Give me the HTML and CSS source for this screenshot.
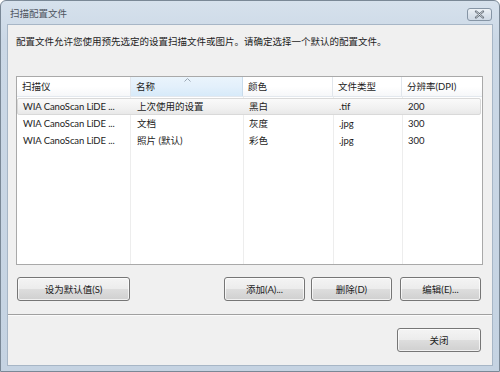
FILE: index.html
```html
<!DOCTYPE html>
<html lang="zh-CN">
<head>
    <meta charset="UTF-8">
    <title>扫描配置文件</title>
    <link rel="stylesheet" href="styles.css">
</head>
<body>
    <div class="window">
        <!-- Barre de titre -->
        <div class="titlebar">
            <span class="title">扫描配置文件</span>
            <button class="close-x" title="关闭">
                <svg width="11" height="9" viewBox="0 0 11 9">
                    <path d="M2 1.5 L9 7.5 M9 1.5 L2 7.5" stroke="#5a6470" stroke-width="2.2" stroke-linecap="round" fill="none"/>
                    <path d="M2 1.5 L9 7.5 M9 1.5 L2 7.5" stroke="#f4f6f8" stroke-width="0.8" stroke-linecap="round" fill="none"/>
                </svg>
            </button>
        </div>

        <div class="client">
            <p class="desc">配置文件允许您使用预先选定的设置扫描文件或图片。请确定选择一个默认的配置文件。</p>

            <!-- Liste des profils -->
            <div class="list">
                <div class="list-head">
                    <div class="col">扫描仪</div>
                    <div class="col sorted">名称
                        <svg class="sort-arrow" width="7" height="4" viewBox="0 0 7 4">
                            <path d="M0.5 3.5 L3.5 0.5 L6.5 3.5" stroke="#9aa7b4" stroke-width="1" fill="none"/>
                        </svg>
                    </div>
                    <div class="col">颜色</div>
                    <div class="col">文件类型</div>
                    <div class="col">分辨率(DPI)</div>
                </div>
                <div class="list-body">
                    <div class="row selected">
                        <div class="cell scanner">WIA CanoScan LiDE ...</div>
                        <div class="cell">上次使用的设置</div>
                        <div class="cell">黑白</div>
                        <div class="cell">.tif</div>
                        <div class="cell">200</div>
                    </div>
                    <div class="row">
                        <div class="cell scanner">WIA CanoScan LiDE ...</div>
                        <div class="cell">文档</div>
                        <div class="cell">灰度</div>
                        <div class="cell">.jpg</div>
                        <div class="cell">300</div>
                    </div>
                    <div class="row">
                        <div class="cell scanner">WIA CanoScan LiDE ...</div>
                        <div class="cell">照片 (默认)</div>
                        <div class="cell">彩色</div>
                        <div class="cell">.jpg</div>
                        <div class="cell">300</div>
                    </div>
                </div>
            </div>

            <div class="actions">
                <button class="btn btn-wide">设为默认值(S)</button>
                <div class="actions-right">
                    <button class="btn">添加(A)...</button>
                    <button class="btn">删除(D)</button>
                    <button class="btn">编辑(E)...</button>
                </div>
            </div>

            <div class="separator"></div>

            <div class="footer">
                <button class="btn">关闭</button>
            </div>
        </div>
    </div>
</body>
</html>
```

FILE: styles.css
```css
body {
    margin: 0;
    font-family: Lato, "Noto Sans CJK SC", sans-serif;
    font-size: 9.5px;
    color: #1c1c1c;
}

.window {
    width: 500px;
    height: 372px;
    box-sizing: border-box;
    border: 1px solid #7a8896;
    border-radius: 6px 6px 0 0;
    background: linear-gradient(#d6e1ec, #cbd8e6 40px, #c5d3e2);
    padding: 0 6px 5px 6px;
    display: flex;
    flex-direction: column;
}

/* Titre */
.titlebar {
    height: 23px;
    display: flex;
    justify-content: space-between;
    align-items: center;
    padding-left: 3px;
}

.title {
    color: #4e5560;
    font-size: 9.5px;
    margin-top: 1px;
}

.close-x {
    width: 25px;
    height: 13px;
    margin: 4px 1px 0 0;
    padding: 0;
    border: 1px solid #8695a5;
    border-radius: 3px;
    background: linear-gradient(#eef2f6, #dbe3ec 50%, #cfd9e4);
    display: flex;
    align-items: center;
    justify-content: center;
}

/* Zone client */
.client {
    flex: 1;
    background: #f0f0f0;
    border: 1px solid #a7b6c6;
    display: flex;
    flex-direction: column;
}

.desc {
    margin: 9px 0 0 8px;
    line-height: 16px;
}

.list {
    margin: 26px 9px 0 8px;
    height: 189px;
    box-sizing: border-box;
    border: 1px solid #a9a9a9;
    background: #fff;
    display: flex;
    flex-direction: column;
}

.list-head {
    display: grid;
    grid-template-columns: 114px 112px 90px 69px 79px;
    height: 19px;
    border-bottom: 1px solid #e3e8ee;
    background: linear-gradient(#ffffff, #ffffff 50%, #f6f7f9);
}

.list-head .col {
    position: relative;
    padding-left: 5px;
    line-height: 19px;
    border-right: 1px solid #e1e6ec;
}

.list-head .col:last-child {
    border-right: none;
}

.list-head .sorted {
    background: linear-gradient(#eaf4fc, #e3f0fb 50%, #d7eaf9);
    border-right-color: #c9dcec;
}

.sort-arrow {
    position: absolute;
    left: 53px;
    top: 1px;
}

.list-body {
    flex: 1;
    padding-top: 1px;
    background:
        linear-gradient(#ededed, #ededed) 113px 0 / 1px 100% no-repeat,
        linear-gradient(#ededed, #ededed) 226px 0 / 1px 100% no-repeat,
        linear-gradient(#ededed, #ededed) 316px 0 / 1px 100% no-repeat,
        linear-gradient(#ededed, #ededed) 385px 0 / 1px 100% no-repeat;
}

.row {
    display: grid;
    grid-template-columns: 114px 112px 90px 69px 77px;
    height: 17px;
    line-height: 16px;
    box-sizing: border-box;
    margin-right: 1px;
    border: 1px solid transparent;
}

.row.selected {
    background: linear-gradient(#fafafa, #f1f1f1 60%, #e8e8e8);
    border-color: #d9d9d9;
    border-radius: 2px;
}

.cell {
    padding-left: 5px;
    white-space: nowrap;
}

.scanner {
    letter-spacing: -0.1px;
}

/* Boutons */
.btn {
    font-family: inherit;
    font-size: 9.5px;
    color: #1c1c1c;
    width: 81px;
    height: 24px;
    padding: 0;
    border: 1px solid #767676;
    border-radius: 3px;
    background: linear-gradient(#f4f4f4, #ececec 48%, #dddddd 52%, #d0d0d0);
    box-shadow: inset 0 0 0 1px rgba(255, 255, 255, 0.7);
}

.btn-wide {
    width: 113px;
}

.actions {
    margin: 12px 11px 0 9px;
    display: flex;
    justify-content: space-between;
}

.actions-right {
    display: flex;
    gap: 6px;
}

.actions-right .btn:last-child {
    margin-left: 2px;
}

.separator {
    margin-top: 13px;
    height: 1px;
    background: #a0a0a0;
    border-bottom: 1px solid #fbfbfb;
}

.footer {
    margin: 12px 11px 0 0;
    display: flex;
    justify-content: flex-end;
}

.footer .btn {
    width: 84px;
}
```
